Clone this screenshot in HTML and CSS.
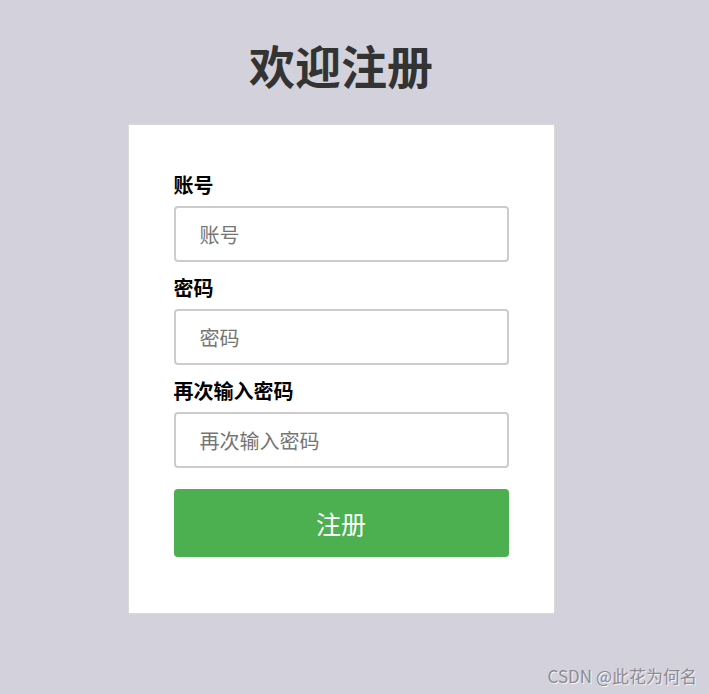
FILE: index.html
```html
<!DOCTYPE html>
<html lang="zh-CN">
<head>
<meta charset="utf-8">
<title>欢迎注册</title>
<link rel="stylesheet" href="styles.css">
</head>
<body>
<div class="page">
  <h1 class="title">欢迎注册</h1>
  <form class="card">
    <label class="label" for="acc">账号</label>
    <input class="field" id="acc" type="text" placeholder="账号">
    <label class="label" for="pwd">密码</label>
    <input class="field" id="pwd" type="password" placeholder="密码">
    <label class="label" for="pwd2">再次输入密码</label>
    <input class="field" id="pwd2" type="password" placeholder="再次输入密码">
    <button class="btn" type="button">注册</button>
  </form>
</div>
<div class="watermark">CSDN @此花为何名</div>
</body>
</html>
```
FILE: styles.css
```css
html, body {
  margin: 0;
  padding: 0;
  height: 100%;
}
body {
  background: #d3d1dc;
  font-family: "Noto Sans CJK SC", "Noto Sans", sans-serif;
  overflow: hidden;
}
.page {
  display: flex;
  flex-direction: column;
  align-items: center;
  padding-top: 36px;
  padding-right: 27px;
}
.title {
  margin: 0 0 32px 0;
  font-size: 46px;
  line-height: 56px;
  font-weight: 700;
  color: #333333;
}
.card {
  box-sizing: border-box;
  width: 427px;
  background: #ffffff;
  border: 1px solid #d9d9d9;
  padding: 47px 45px 56px 45px;
  display: flex;
  flex-direction: column;
}
.label {
  font-size: 20px;
  line-height: 25px;
  font-weight: 700;
  color: #000;
  margin-bottom: 9px;
}
.field {
  box-sizing: border-box;
  height: 56px;
  border: 2px solid #cccccc;
  border-radius: 4px;
  padding: 0 24px;
  font-family: "Noto Sans CJK SC", sans-serif;
  font-size: 20px;
  color: #333;
  margin-bottom: 13px;
  outline: none;
}
.field::placeholder {
  color: #757575;
}
.field:last-of-type {
  margin-bottom: 21px;
}
.btn {
  height: 68px;
  border: none;
  border-radius: 4px;
  background: #4caf50;
  color: #ffffff;
  font-family: "Noto Sans CJK SC", sans-serif;
  font-size: 25px;
  cursor: pointer;
}
.watermark {
  position: absolute;
  right: 12px;
  bottom: 6px;
  font-family: "Noto Sans CJK SC", sans-serif;
  font-size: 17px;
  color: #8c8a92;
  text-shadow: 1px 1px 0 #f4f4f6;
}
```
